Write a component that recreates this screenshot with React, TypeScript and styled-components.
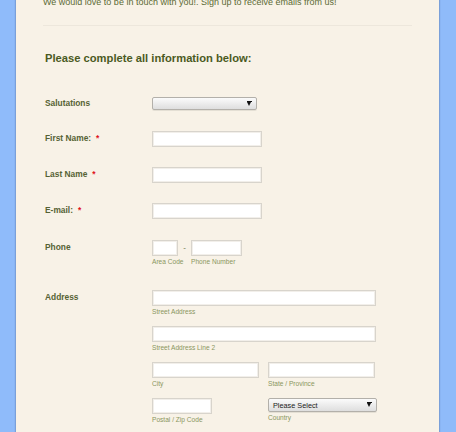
import React from "react";
import styled, { createGlobalStyle } from "styled-components";

const Global = createGlobalStyle`
  html, body { margin: 0; padding: 0; }
  body {
    background: #8fbbfa;
    font-family: "Liberation Sans", Arial, sans-serif;
    overflow: hidden;
  }
`;

const Card = styled.div`
  margin-left: 16px;
  width: 423px;
  min-height: 440px;
  box-sizing: border-box;
  background: #f8f2e7;
  box-shadow: 0 0 1px 1px rgba(60, 80, 120, 0.25);
  padding: 0 27px 20px;
`;

const Intro = styled.p`
  margin: -4px 0 0;
  font-size: 9px;
  line-height: 12px;
  color: #5c6a35;
`;

const Divider = styled.hr`
  margin: 17px 0 0;
  border: 0;
  height: 1px;
  background: #ede7dc;
`;

const Heading = styled.h2`
  margin: 25px 0 0 2px;
  font-size: 11.2px;
  line-height: 14px;
  font-weight: bold;
  color: #4a5a22;
`;

const Row = styled.div<{ $mt: number }>`
  display: grid;
  grid-template-columns: 107px 1fr;
  align-items: start;
  margin-top: ${(p) => p.$mt}px;
  padding-left: 2px;
`;

const Label = styled.div<{ $h?: number }>`
  font-size: 8.4px;
  font-weight: bold;
  color: #566234;
  line-height: ${(p) => p.$h ?? 15}px;
  white-space: nowrap;
`;

const Req = styled.span`
  color: #e0141b;
  margin-left: 5px;
`;

const Field = styled.div`
  display: flex;
  flex-direction: column;
`;

const Line = styled.div<{ $gap?: number }>`
  display: flex;
  align-items: flex-start;
  gap: ${(p) => p.$gap ?? 9}px;
`;

const Group = styled.div<{ $mt?: number }>`
  display: flex;
  flex-direction: column;
  margin-top: ${(p) => p.$mt ?? 0}px;
`;

const Input = styled.input<{ $w: number }>`
  display: block;
  width: ${(p) => p.$w}px;
  height: 16px;
  box-sizing: border-box;
  margin: 0;
  padding: 0 3px;
  background: #ffffff;
  border: 1px solid #d8d4cc;
  box-shadow: inset 0 0 0 1px #f2efea;
  outline: none;
`;

const Sub = styled.div`
  margin-top: 1px;
  max-width: 0;
  overflow: visible;
  font-size: 6.6px;
  line-height: 9px;
  color: #8a9660;
  white-space: nowrap;
`;

const Dash = styled.span`
  font-size: 8px;
  line-height: 16px;
  color: #6a7444;
  width: 4px;
  text-align: center;
`;

const Select = styled.div<{ $w: number; $h: number }>`
  position: relative;
  width: ${(p) => p.$w}px;
  height: ${(p) => p.$h}px;
  box-sizing: border-box;
  border: 1px solid #b3b0aa;
  border-radius: 2px;
  background: linear-gradient(#fbfbfb, #dedede);
  box-shadow: 0 1px 0 rgba(0, 0, 0, 0.08);
  display: flex;
  align-items: center;
  padding: 0 4px;
  font-size: 7.3px;
  color: #222;
`;

const Arrow = styled.span`
  position: absolute;
  right: 5px;
  top: 50%;
  margin-top: -2px;
  width: 0;
  height: 0;
  border-left: 2.5px solid transparent;
  border-right: 2.5px solid transparent;
  border-top: 4px solid #111;
  &::before {
    content: "";
    position: absolute;
    left: -2.5px;
    top: -5px;
    width: 5px;
    height: 1px;
    background: #111;
  }
`;

export default function App() {
  return (
    <>
      <Global />
      <Card>
        <Intro>We would love to be in touch with you!. Sign up to receive emails from us!</Intro>
        <Divider />
        <Heading>Please complete all information below:</Heading>

        <Row $mt={32}>
          <Label $h={13}>Salutations</Label>
          <Field>
            <Select $w={105} $h={13}>
              <Arrow />
            </Select>
          </Field>
        </Row>

        <Row $mt={21}>
          <Label>
            First Name:<Req>*</Req>
          </Label>
          <Field>
            <Input $w={110} />
          </Field>
        </Row>

        <Row $mt={20}>
          <Label>
            Last Name<Req>*</Req>
          </Label>
          <Field>
            <Input $w={110} />
          </Field>
        </Row>

        <Row $mt={20}>
          <Label>
            E-mail:<Req>*</Req>
          </Label>
          <Field>
            <Input $w={110} />
          </Field>
        </Row>

        <Row $mt={21}>
          <Label>Phone</Label>
          <Field>
            <Line $gap={4.5}>
              <Group>
                <Input $w={26} />
                <Sub>Area Code</Sub>
              </Group>
              <Dash>-</Dash>
              <Group>
                <Input $w={51} />
                <Sub>Phone Number</Sub>
              </Group>
            </Line>
          </Field>
        </Row>

        <Row $mt={24}>
          <Label>Address</Label>
          <Field>
            <Group>
              <Input $w={224} />
              <Sub>Street Address</Sub>
            </Group>
            <Group $mt={10}>
              <Input $w={224} />
              <Sub>Street Address Line 2</Sub>
            </Group>
            <Line $gap={9}>
              <Group $mt={10}>
                <Input $w={107} />
                <Sub>City</Sub>
              </Group>
              <Group $mt={10}>
                <Input $w={107} />
                <Sub>State / Province</Sub>
              </Group>
            </Line>
            <Line $gap={56}>
              <Group $mt={10}>
                <Input $w={60} />
                <Sub>Postal / Zip Code</Sub>
              </Group>
              <Group $mt={10}>
                <Select $w={109} $h={14}>
                  Please Select
                  <Arrow />
                </Select>
                <Sub>Country</Sub>
              </Group>
            </Line>
          </Field>
        </Row>
      </Card>
    </>
  );
}
